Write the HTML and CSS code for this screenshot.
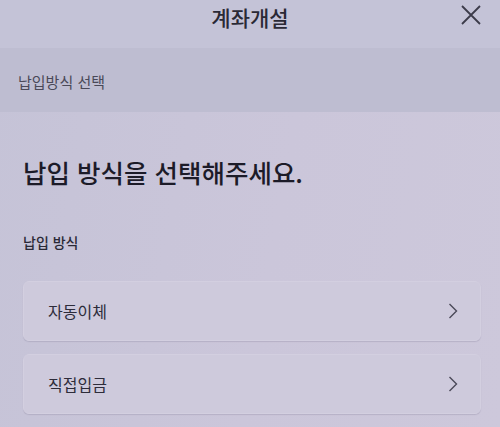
FILE: index.html
```html
<!DOCTYPE html>
<html lang="ko">
<head>
  <meta charset="UTF-8">
  <meta name="viewport" content="width=device-width, initial-scale=1.0">
  <title>계좌개설</title>
  <link rel="stylesheet" href="styles.css">
</head>
<body>
  <div class="header">
    <h1>계좌개설</h1>
    <button class="close" aria-label="닫기">
      <svg width="22" height="22" viewBox="0 0 22 22"><path d="M2 2 L20 20 M20 2 L2 20" stroke="#3c3b4a" stroke-width="1.8" fill="none"/></svg>
    </button>
  </div>
  <div class="step">납입방식 선택</div>
  <div class="content">
    <h2>납입 방식을 선택해주세요.</h2>
    <div class="label">납입 방식</div>
    <div class="option">
      <span>자동이체</span>
      <svg width="10" height="16" viewBox="0 0 10 16"><path d="M1.5 1 L8.5 8 L1.5 15" stroke="#4a4958" stroke-width="1.4" fill="none"/></svg>
    </div>
    <div class="option">
      <span>직접입금</span>
      <svg width="10" height="16" viewBox="0 0 10 16"><path d="M1.5 1 L8.5 8 L1.5 15" stroke="#4a4958" stroke-width="1.4" fill="none"/></svg>
    </div>
  </div>
</body>
</html>
```
FILE: styles.css
```css
body {
  margin: 0;
  font-family: "Noto Sans CJK KR", "Noto Sans", sans-serif;
  background: linear-gradient(100deg, #c5c3d7 0%, #cbc6da 55%, #cdc8db 100%);
  color: #232230;
  height: 427px;
  overflow: hidden;
}

.header {
  height: 48px;
  display: flex;
  align-items: center;
  justify-content: center;
  position: relative;
  background: #c4c3d7;
}

.header h1 {
  margin: 0;
  font-size: 21px;
  font-weight: 500;
  color: #2a2935;
  margin-top: -14px;
}

.close {
  position: absolute;
  right: 18px;
  top: 4px;
  background: none;
  border: none;
  padding: 0;
}

.step {
  height: 64px;
  background: #bebdd1;
  display: flex;
  align-items: center;
  padding: 2px 0 0 18px;
  box-sizing: border-box;
  font-size: 15px;
  color: #4a4958;
}

.content {
  padding: 42px 19px 0 23px;
}

.content h2 {
  margin: 0;
  font-size: 25.5px;
  font-weight: 500;
  color: #1c1b28;
  line-height: 36px;
}

.label {
  margin-top: 42px;
  font-size: 14px;
  line-height: 20px;
  font-weight: 500;
  color: #2a2936;
}

.option {
  height: 60px;
  box-sizing: border-box;
  border: 1px solid #d3cfe0;
  border-radius: 6px;
  background: #cecadc;
  display: flex;
  align-items: center;
  justify-content: space-between;
  padding: 0 22px 0 24px;
  font-size: 16px;
  color: #2d2c3a;
  box-shadow: 0 1px 1px rgba(150, 145, 170, 0.4);
}

.label + .option {
  margin-top: 29px;
}

.option + .option {
  margin-top: 13px;
}
```
